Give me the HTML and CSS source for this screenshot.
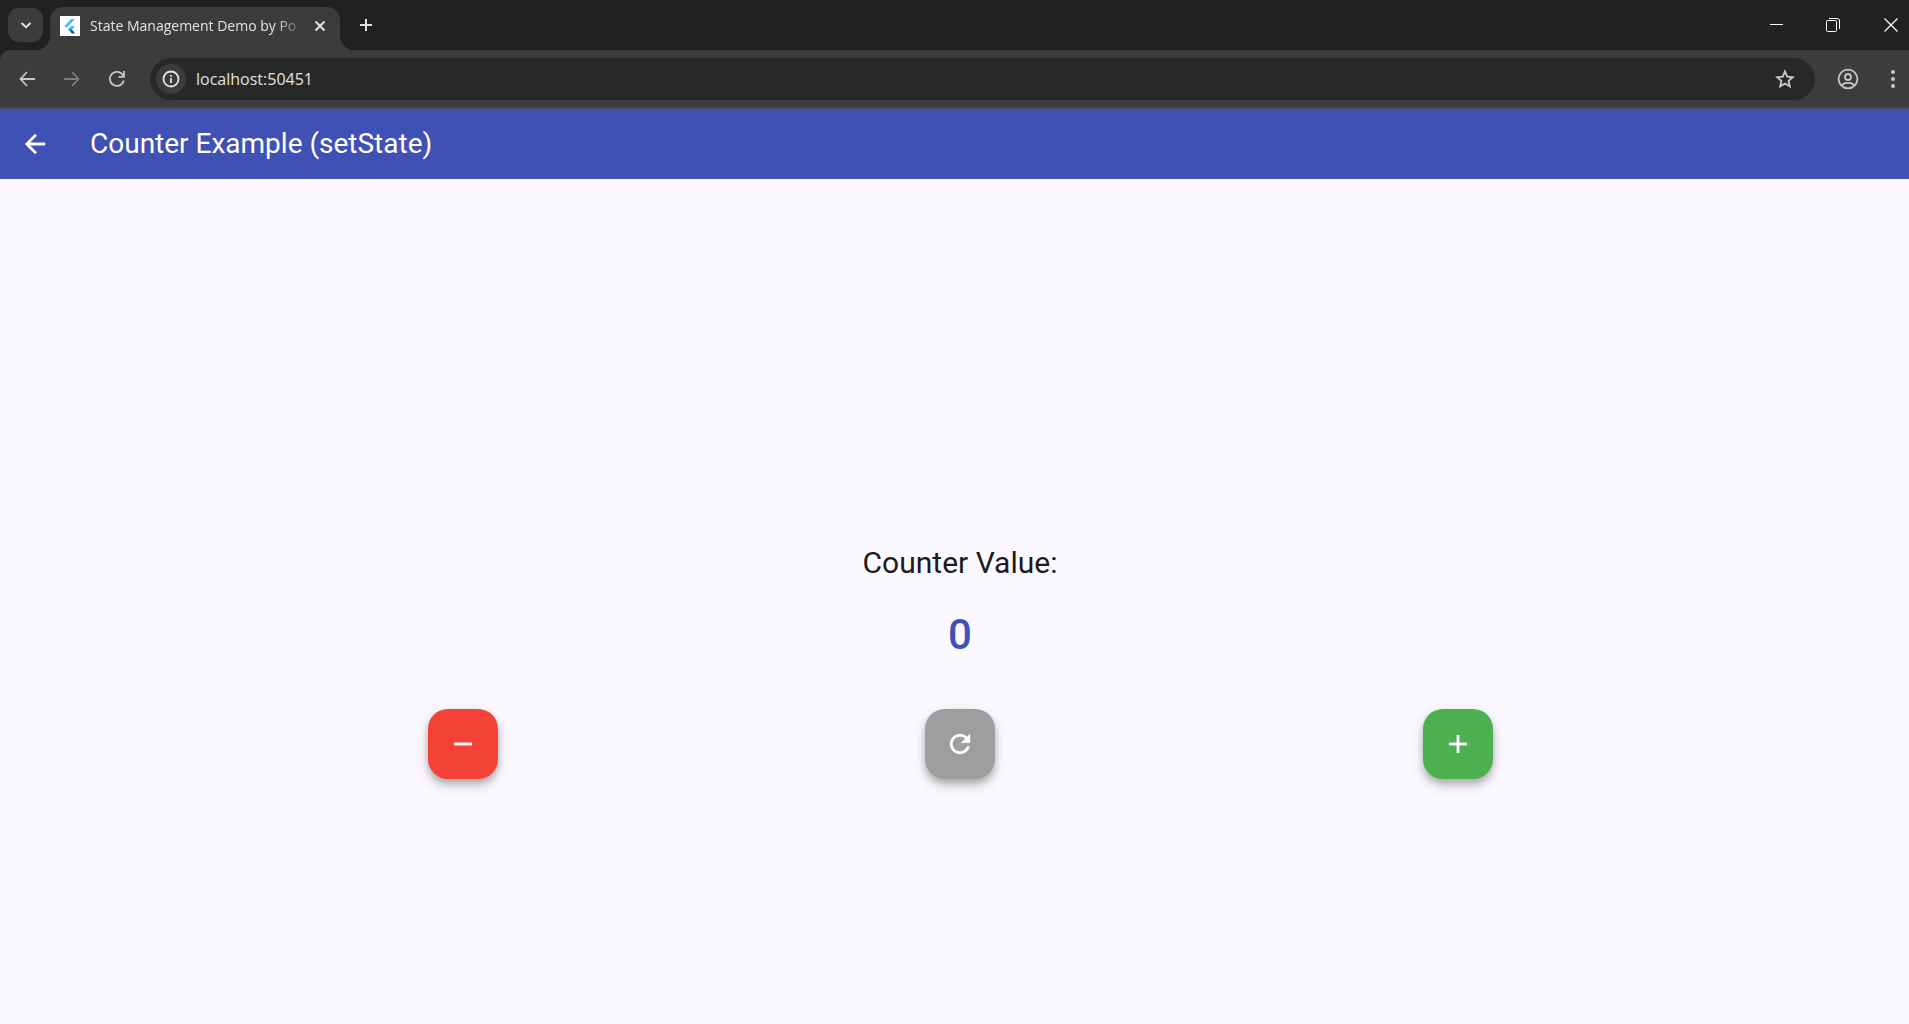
FILE: index.html
```html
<!DOCTYPE html>
<html lang="en">
<head>
<meta charset="utf-8">
<title>State Management Demo</title>
<link rel="stylesheet" href="styles.css">
</head>
<body>
<div class="browser">
  <div class="chrome">
  <header class="tabstrip">
    <button class="tab-search" aria-label="Search tabs"><svg width="12" height="12" viewBox="0 0 12 12"><path d="M1.500 4L6 8.200 10.500 4" fill="none" stroke="currentColor" stroke-width="2"/></svg></button>
    <div class="tab">
      <svg class="favicon" width="20" height="20" viewBox="0 0 20 20"><path fill="#fff" d="M0 0h20v20H0z"/><path fill="#42c3f7" d="M11 3h4L6.500 12l-2-2z"/><path fill="#42c3f7" d="M11 10h4l-3 3.500 -3.500 0z"/><path fill="#1c9be6" d="M8 13.500l2-2 2 2-2 2z"/><path fill="#0b4fa0" d="M10 15.500l2-2 3 4h-3z"/></svg>
      <span class="tab-title">State Management Demo by Po</span>
      <button class="tab-close" aria-label="Close tab"><svg width="12" height="12" viewBox="0 0 12 12"><path d="M1.500 1.500l9 9M10.500 1.500l-9 9" fill="none" stroke="currentColor" stroke-width="2"/></svg></button>
    </div>
    <button class="new-tab" aria-label="New tab"><svg width="14" height="14" viewBox="0 0 14 14"><path d="M7 1v12M1 7h12" fill="none" stroke="currentColor" stroke-width="2"/></svg></button>
    <div class="window-controls">
      <button aria-label="Minimize"><svg width="14" height="14" viewBox="0 0 14 14"><path d="M0 6.500h13" stroke="#fff"/></svg></button>
      <button aria-label="Restore"><svg width="14" height="14" viewBox="0 0 14 14" fill="none" stroke="#fff"><path d="M3 .5h8a2.500 2.500 0 0 1 2.500 2.500v8"/><rect x=".5" y="2.500" width="10" height="11" rx="1"/></svg></button>
      <button aria-label="Close"><svg width="14" height="14" viewBox="0 0 14 14"><path d="M.5 .5l13 13M13.500 .5l-13 13" stroke="#fff" stroke-width="1.200"/></svg></button>
    </div>
  </header>
  <nav class="toolbar">
    <button class="tool" aria-label="Back"><svg width="16" height="16" viewBox="0 0 16 16"><path d="M8 1L1.500 8 8 15M1.500 8H16" fill="none" stroke="currentColor" stroke-width="1.800"/></svg></button>
    <button class="tool tool-off" aria-label="Forward"><svg width="16" height="16" viewBox="0 0 16 16"><path d="M8 1l6.500 7L8 15M14.500 8H0" fill="none" stroke="currentColor" stroke-width="1.800"/></svg></button>
    <button class="tool" aria-label="Reload"><svg width="16" height="16" viewBox="0 0 16 16"><path d="M14.700 9.500A7 7 0 1 1 14 4.500M15 0v5.800H9.500" fill="none" stroke="currentColor" stroke-width="1.800"/></svg></button>
    <div class="omnibox">
      <button class="site-info" aria-label="Site information"><svg width="18" height="18" viewBox="0 0 18 18"><circle cx="9" cy="9" r="7.500" fill="none" stroke="currentColor" stroke-width="1.800"/><path d="M9 5v1.800M9 8v5" stroke="currentColor" stroke-width="1.800"/></svg></button>
      <input class="address" type="text" aria-label="Address" value="localhost:50451">
      <button class="star" aria-label="Bookmark"><svg width="20" height="20" viewBox="0 0 20 20"><path d="M10 2.500l2.200 5.200 5.600.5-4.200 3.700 1.200 5.500L10 14.500l-4.800 2.900 1.200-5.500L2.200 8.200l5.600-.5z" fill="none" stroke="currentColor" stroke-width="1.900"/></svg></button>
    </div>
    <button class="tool profile" aria-label="Profile"><svg width="22" height="22" viewBox="0 0 22 22" fill="none" stroke="currentColor" stroke-width="1.800"><circle cx="11" cy="11" r="9.400"/><circle cx="11" cy="9" r="3"/><path d="M4.500 17.200c3.500-3 9.500-3 13 0"/></svg></button>
    <button class="tool more" aria-label="Menu"><svg width="4" height="18" viewBox="0 0 4 18" fill="currentColor"><circle cx="2" cy="2" r="2"/><circle cx="2" cy="9" r="2"/><circle cx="2" cy="16" r="2"/></svg></button>
  </nav>
  </div>
  <section class="app">
    <header class="app-bar">
      <button class="app-back" aria-label="Back"><svg width="30" height="30" viewBox="0 0 24 24" fill="currentColor" stroke="currentColor" stroke-width=".3"><path d="M20 11H7.830l5.590-5.590L12 4l-8 8 8 8 1.410-1.410L7.830 13H20v-2z"/></svg></button>
      <h1>Counter Example (setState)</h1>
    </header>
    <main class="counter">
      <p class="label">Counter Value:</p>
      <output class="value">0</output>
      <div class="actions">
        <button class="fab fab-red" aria-label="Decrease"><svg width="30" height="30" viewBox="0 0 24 24" fill="currentColor" stroke="currentColor" stroke-width=".3"><path d="M19 13H5v-2h14v2z"/></svg></button>
        <button class="fab fab-grey" aria-label="Reset"><svg width="30" height="30" viewBox="0 0 24 24" fill="currentColor" stroke="currentColor" stroke-width=".3"><path d="M17.650 6.350C16.200 4.900 14.210 4 12 4c-4.420 0-7.990 3.580-7.990 8s3.570 8 7.990 8c3.730 0 6.840-2.550 7.730-6h-2.080c-.82 2.330-3.040 4-5.650 4-3.310 0-6-2.690-6-6s2.690-6 6-6c1.660 0 3.140.69 4.220 1.780L13 11h7V4l-2.350 2.350z"/></svg></button>
        <button class="fab fab-green" aria-label="Increase"><svg width="30" height="30" viewBox="0 0 24 24" fill="currentColor" stroke="currentColor" stroke-width=".3"><path d="M19 13h-6v6h-2v-6H5v-2h6V5h2v6h6v2z"/></svg></button>
      </div>
    </main>
  </section>
</div>
</body>
</html>
```
FILE: styles.css
```css
* { box-sizing: border-box; }
body { margin: 0; background: #fbf9ff; }
button {
  display: flex;
  align-items: center;
  justify-content: center;
  flex: none;
  padding: 0;
  border: 0;
  background: none;
  color: inherit;
}
svg { display: block; }
.browser {
  min-height: 100vh;
  overflow: hidden;
  color: #e3e3e3;
  font-family: "Open Sans", "Noto Sans", sans-serif;
}
.chrome { background: #1f2221; }
.tabstrip {
  display: flex;
  align-items: center;
  height: 50px;
  padding-left: 8px;
}
.tab-search {
  width: 35px;
  height: 34px;
  border-radius: 11px;
  background: #3c3c3c;
}
.tab {
  position: relative;
  display: flex;
  align-items: center;
  align-self: flex-end;
  width: 290px;
  height: 43px;
  margin-left: 7px;
  padding: 0 12px 6px 10px;
  border-radius: 13px 13px 0 0;
  background: #3c3c3c;
}
.tab::before, .tab::after {
  content: "";
  position: absolute;
  bottom: 0;
  width: 14px;
  height: 14px;
}
.tab::before {
  right: 100%;
  background: radial-gradient(circle at 0 0, transparent 14px, #3c3c3c 14px);
}
.tab::after {
  left: 100%;
  background: radial-gradient(circle at 100% 0, transparent 14px, #3c3c3c 14px);
}
.tab-title {
  flex: 1;
  margin-left: 10px;
  overflow: hidden;
  white-space: nowrap;
  font-size: 14px;
  line-height: 20px;
  -webkit-mask-image: linear-gradient(to right, #000 185px, transparent 215px);
  mask-image: linear-gradient(to right, #000 185px, transparent 215px);
}
.tab-close { width: 16px; height: 24px; }
.new-tab { width: 36px; height: 36px; margin-left: 8px; }
.window-controls { display: flex; margin-left: auto; }
.window-controls button { width: 56px; height: 48px; }
.window-controls button:last-child { width: 48px; padding-left: 12px; }
.toolbar {
  display: flex;
  align-items: center;
  height: 59px;
  padding: 0 4px;
  border-bottom: 2px solid #48484a;
  border-top-left-radius: 10px;
  background: #3c3c3c;
}
.tool { width: 45px; height: 40px; color: #c7c7c7; }
.tool-off { color: #7d7d7d; }
.omnibox {
  display: flex;
  align-items: center;
  flex: 1;
  height: 42px;
  margin-left: 11px;
  padding: 0 20px 0 6px;
  border-radius: 21px;
  background: #282828;
}
.site-info {
  width: 30px;
  height: 30px;
  border-radius: 50%;
  background: #3c3c3c;
}
.address {
  flex: 1;
  min-width: 0;
  margin-left: 10px;
  padding: 1px 0 0;
  border: 0;
  outline: 0;
  background: none;
  color: #e3e3e3;
  font: 16px/24px "Open Sans", "Noto Sans", sans-serif;
}
.star { color: #c7c7c7; }
.profile { width: 65px; }
.more { width: 25px; }
.app {
  width: calc(100% + 11px);
  color: #1d1b20;
  font-family: Roboto, sans-serif;
}
.app-bar {
  display: flex;
  align-items: center;
  height: 70px;
  background: #3f51b5;
  color: #fff;
}
.app-back { width: 70px; height: 70px; }
.app-bar h1 {
  margin: 0 0 0 20px;
  font-size: 28px;
  font-weight: 400;
  line-height: 36px;
}
.counter {
  display: flex;
  flex-direction: column;
  align-items: center;
  padding: 364px 0 40px;
}
.label { margin: 0; font-size: 30px; line-height: 40px; }
.value {
  margin-top: 26px;
  color: #3f51b5;
  font-size: 42px;
  font-weight: 500;
  line-height: 52px;
}
.actions {
  display: flex;
  justify-content: space-evenly;
  align-self: stretch;
  margin-top: 48px;
}
.fab {
  width: 70px;
  height: 70px;
  border-radius: 20px;
  color: #fff;
  box-shadow: 0 4px 6px rgba(0, 0, 0, .2), 0 8px 12px rgba(0, 0, 0, .12), 0 1px 20px rgba(0, 0, 0, .06);
}
.fab-red { background: #f44336; }
.fab-grey { background: #9e9e9e; }
.fab-green { background: #4caf50; }
```
